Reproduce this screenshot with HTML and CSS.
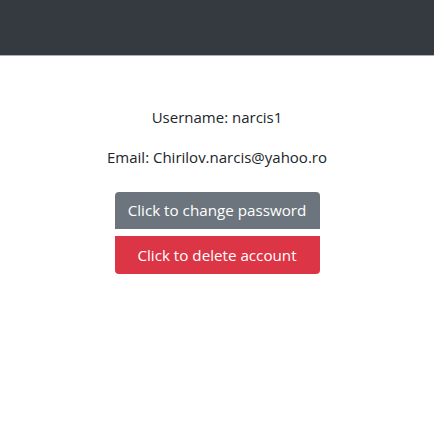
FILE: index.html
```html
<!DOCTYPE html>
<html>
<head>
<meta charset="utf-8">
<link rel="stylesheet" href="styles.css">
</head>
<body>
<nav class="navbar"></nav>
<main class="profile">
  <p class="line">Username: narcis1</p>
  <p class="line">Email: Chirilov.narcis@yahoo.ro</p>
  <div class="actions">
    <button class="btn btn-secondary">Click to change password</button>
    <button class="btn btn-danger">Click to delete account</button>
  </div>
</main>
</body>
</html>
```
FILE: styles.css
```css
html, body {
  margin: 0;
  padding: 0;
  background: #fff;
}
body {
  font-family: "Open Sans", "Noto Sans", sans-serif;
  font-size: 15px;
  line-height: 24px;
  color: #212529;
}
.navbar {
  height: 55px;
  background: #343a40;
  border-bottom: 1px solid #a9b0b6;
}
.profile {
  display: flex;
  flex-direction: column;
  align-items: center;
  padding-top: 49px;
}
.line {
  margin: 0 0 16px 0;
}
.actions {
  display: flex;
  flex-direction: column;
  gap: 7px;
  margin-top: 7px;
  width: 205px;
}
.btn {
  font-family: inherit;
  font-size: 15.2px;
  line-height: 24px;
  color: #fff;
  border: none;
  padding: 6px 0 7px;
  height: 37px;
}
.btn-secondary {
  background: #6c757d;
  border-radius: 4px 4px 0 0;
}
.btn-danger {
  background: #dc3545;
  border-radius: 0 0 4px 4px;
  height: 38px;
}
```
